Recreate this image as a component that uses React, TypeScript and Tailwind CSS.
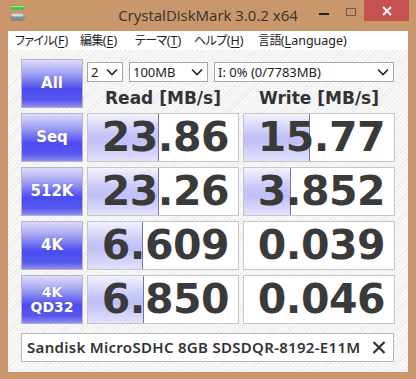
import React from "react";

const rows = [
  { label: ["Seq"], read: "23.86", write: "15.77", readBar: 71, writeBar: 66 },
  { label: ["512K"], read: "23.26", write: "3.852", readBar: 71, writeBar: 47 },
  { label: ["4K"], read: "6.609", write: "0.039", readBar: 55, writeBar: 0 },
  { label: ["4K", "QD32"], read: "6.850", write: "0.046", readBar: 56, writeBar: 0 },
];

const menu = [
  { pre: "ファイル", key: "F", post: ")", w: "w-[65px]" },
  { pre: "編集", key: "E", post: ")", w: "w-[55px]" },
  { pre: "テーマ", key: "T", post: ")", w: "w-[59px]" },
  { pre: "ヘルプ", key: "H", post: ")", w: "w-[64px]" },
  { pre: "言語", key: "L", post: "anguage)", w: "w-auto" },
];

function Chevron() {
  return (
    <svg width="12" height="8" viewBox="0 0 12 8" className="shrink-0">
      <path d="M1 1.5 L6 6.5 L11 1.5" fill="none" stroke="#222" strokeWidth="1.6" />
    </svg>
  );
}

function Combo({ text, className }: { text: string; className: string }) {
  return (
    <div
      className={`h-[20px] bg-white border border-[#a6a6a6] flex items-center justify-between pl-[3px] pr-[4px] text-[13px] text-[#222] font-['Noto_Sans',sans-serif] leading-none ${className}`}
    >
      <span>{text}</span>
      <Chevron />
    </div>
  );
}

function TestButton({ lines }: { lines: string[] }) {
  return (
    <div className="h-[49px] border border-[#b4b4cc] bg-[linear-gradient(180deg,#dcdcf8_0%,#a4a4f4_28%,#4c4cf0_62%,#5656ee_85%,#8c8cf0_100%)] flex flex-col items-center justify-center text-white font-['DejaVu_Sans',sans-serif] font-bold leading-[15px] [text-shadow:0_0_1px_#6060a0]">
      {lines.map((l) => (
        <span key={l} className={lines.length > 1 ? "text-[14px]" : "text-[15px]"}>
          {l}
        </span>
      ))}
    </div>
  );
}

function Value({ value, bar }: { value: string; bar: number }) {
  return (
    <div className="relative h-[49px] bg-white border border-[#c6c6c6] flex items-center justify-end pr-[9px]">
      {bar > 0 && (
        <div
          className="absolute left-0 top-0 bottom-0 border-r border-[#7474a8] bg-[linear-gradient(180deg,#f2f2ff_0%,#c4c4f8_45%,#c0c0f6_60%,#e2e2fc_100%)]"
          style={{ width: bar }}
        />
      )}
      <span className="relative text-[41px] font-bold text-[#3a3a3a] font-['DejaVu_Sans',sans-serif] leading-none tracking-[-0.5px]">
        {value}
      </span>
    </div>
  );
}

export default function App() {
  return (
    <div className="w-[416px] h-[379px] bg-[#c9976b] flex flex-col overflow-hidden">
      {/* title bar */}
      <div className="h-[31px] grid grid-cols-[1fr_auto_1fr] items-start">
        <div className="pl-[10px] pt-[5px]">
          <svg width="16" height="17" viewBox="0 0 16 17">
            <rect x="1" y="0.5" width="13" height="4" rx="1" fill="#3cc43c" />
            <rect x="1" y="1" width="13" height="1.2" fill="#8ef08e" />
            <rect x="0.5" y="8" width="14" height="8" rx="2" fill="#8a8a8a" />
            <rect x="1.5" y="8.5" width="12" height="3" rx="1" fill="#d8d8d8" />
            <rect x="11" y="12.5" width="2" height="1.5" fill="#40d040" />
          </svg>
        </div>
        <div className="pt-[5px] text-[15px] text-[#333] font-['Open_Sans',sans-serif] leading-[20px]">
          CrystalDiskMark 3.0.2 x64
        </div>
        <div className="flex justify-end items-start">
          <div className="w-[10px] h-[2px] bg-[#222] mt-[13px] mr-[17px]" />
          <div className="w-[10px] h-[8px] border border-[#6a5a4a] mt-[8px] mr-[8px]" />
          <div className="w-[45px] h-[21px] bg-[#c75050] flex items-center justify-center mr-[7px]">
            <svg width="10" height="10" viewBox="0 0 10 10">
              <path d="M1 1 L9 9 M9 1 L1 9" stroke="#fff" strokeWidth="1.8" />
            </svg>
          </div>
        </div>
      </div>

      {/* client area */}
      <div className="mx-[8px] h-[341px] flex flex-col">
        <div className="h-[19px] bg-white flex items-center pl-[7px] text-[12.5px] text-[#222] leading-none">
          {menu.map((m) => (
            <span key={m.key} className={`${m.w} shrink-0 whitespace-nowrap`}>
              <span className="font-['Noto_Sans_CJK_JP',sans-serif] [font-feature-settings:'palt'] text-[12px] tracking-[-0.6px]">
                {m.pre}
              </span>
              <span className="font-['Noto_Sans',sans-serif]">
                (<span className="underline underline-offset-2">{m.key}</span>
                {m.post}
              </span>
            </span>
          ))}
        </div>

        <div className="flex-1 bg-[repeating-linear-gradient(135deg,#f8f8f8_0px,#f8f8f8_2px,#ececec_2px,#ececec_3px)] pt-[9px] pl-[13px]">
          <div className="grid grid-cols-[62px_152px_152px] gap-x-[4px] gap-y-[5px]">
            <TestButton lines={["All"]} />
            <div className="col-span-2 flex flex-col">
              <div className="flex gap-[6px] pt-[3px]">
                <Combo text="2" className="w-[36px]" />
                <Combo text="100MB" className="w-[79px]" />
                <Combo text="I: 0% (0/7783MB)" className="w-[180px]" />
              </div>
              <div className="grid grid-cols-2 gap-x-[4px] pt-[6px] text-[17px] font-bold text-[#333] font-['DejaVu_Sans',sans-serif] leading-[20px] text-center">
                <span>Read [MB/s]</span>
                <span>Write [MB/s]</span>
              </div>
            </div>
            {rows.map((r) => (
              <React.Fragment key={r.label.join("")}>
                <TestButton lines={r.label} />
                <Value value={r.read} bar={r.readBar} />
                <Value value={r.write} bar={r.writeBar} />
              </React.Fragment>
            ))}
          </div>

          <div className="mt-[9px] w-[373px] h-[29px] bg-white border border-[#b8b8b8] flex items-center justify-between pl-[5px] pr-[7px]">
            <span className="text-[15px] tracking-[0.3px] font-semibold text-[#333] font-['Noto_Sans',sans-serif] leading-none">
              Sandisk MicroSDHC 8GB SDSDQR-8192-E11M
            </span>
            <svg width="14" height="13" viewBox="0 0 14 13">
              <path d="M1.5 1 L12.5 12 M12.5 1 L1.5 12" stroke="#333" strokeWidth="2.2" />
            </svg>
          </div>
        </div>
      </div>
    </div>
  );
}
